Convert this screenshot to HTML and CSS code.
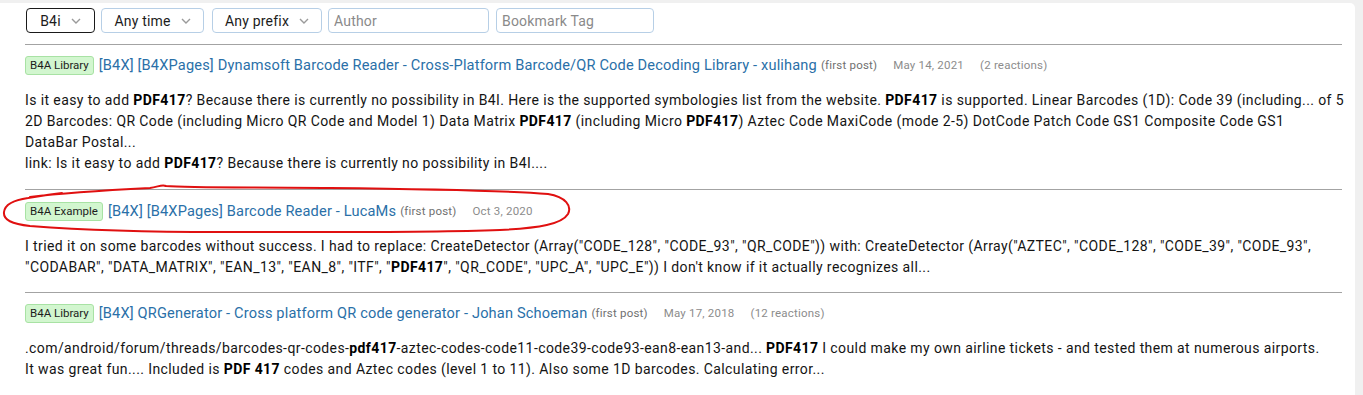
FILE: index.html
```html
<!DOCTYPE html>
<html lang="en">
<head>
    <meta charset="UTF-8">
    <meta name="viewport" content="width=device-width, initial-scale=1.0">
    <title>Search results</title>
    <link rel="stylesheet" href="styles.css">
</head>
<body>
    <div class="panel">
        <form class="filters">
            <div class="select focused">B4i <svg class="chev" viewBox="0 0 10 6"><polyline points="1,1 5,5 9,1"/></svg></div>
            <div class="select time">Any time <svg class="chev" viewBox="0 0 10 6"><polyline points="1,1 5,5 9,1"/></svg></div>
            <div class="select prefix">Any prefix <svg class="chev" viewBox="0 0 10 6"><polyline points="1,1 5,5 9,1"/></svg></div>
            <input type="text" class="field author" placeholder="Author">
            <input type="text" class="field tag" placeholder="Bookmark Tag">
        </form>

        <ul class="results">
            <li class="result">
                <div class="head">
                    <span class="badge">B4A Library</span>
                    <a class="title" href="#">[B4X] [B4XPages] Dynamsoft Barcode Reader - Cross-Platform Barcode/QR Code Decoding Library - xulihang</a>
                    <span class="small">(first post)</span>
                    <span class="meta">May 14, 2021</span>
                    <span class="meta">(2 reactions)</span>
                </div>
                <p class="snippet">Is it easy to add <b>PDF417</b>? Because there is currently no possibility in B4I. Here is the supported symbologies list from the website. <b>PDF417</b> is supported. Linear Barcodes (1D): Code 39 (including... of 5 2D Barcodes: QR Code (including Micro QR Code and Model 1) Data Matrix <b>PDF417</b> (including Micro <b>PDF417</b>) Aztec Code MaxiCode (mode 2-5) DotCode Patch Code GS1 Composite Code GS1 DataBar&nbsp;Postal...<br>link: Is it easy to add <b>PDF417</b>? Because there is currently no possibility in B4I....</p>
            </li>
            <li class="result">
                <div class="head">
                    <span class="badge">B4A Example</span>
                    <a class="title" href="#">[B4X] [B4XPages] Barcode Reader - LucaMs</a>
                    <span class="small">(first post)</span>
                    <span class="meta">Oct 3, 2020</span>
                </div>
                <p class="snippet">I tried it on some barcodes without success. I had to replace: CreateDetector (Array("CODE_128", "CODE_93", "QR_CODE")) with: CreateDetector (Array("AZTEC", "CODE_128", "CODE_39", "CODE_93", "CODABAR", "DATA_MATRIX", "EAN_13", "EAN_8", "ITF", "<b>PDF417</b>", "QR_CODE", "UPC_A", "UPC_E")) I don't know if it actually recognizes all...</p>
            </li>
            <li class="result">
                <div class="head">
                    <span class="badge">B4A Library</span>
                    <a class="title" href="#">[B4X] QRGenerator - Cross platform QR code generator - Johan Schoeman</a>
                    <span class="small">(first post)</span>
                    <span class="meta">May 17, 2018</span>
                    <span class="meta">(12 reactions)</span>
                </div>
                <p class="snippet">.com/android/forum/threads/barcodes-qr-codes-<b>pdf417</b>-aztec-codes-code11-code39-code93-ean8-ean13-and... <b>PDF417</b> I could make my own airline tickets - and tested them at numerous airports. It&nbsp;was great fun.... Included is <b>PDF 417</b> codes and Aztec codes (level 1 to 11). Also some 1D barcodes. Calculating error...</p>
            </li>
        </ul>

        <!-- hand drawn mark over the second result -->
        <svg class="scribble" viewBox="0 0 1363 395">
            <path d="M30 197 C70 192 110 190 150 188 C158 187 162 184 166 186 C190 188 260 187 330 188 C420 189 500 190 548 194 C566 197 572 206 568 214 C562 224 540 228 500 230 C420 233 320 232 220 232 C140 232 70 229 30 226 C12 224 3 220 4 212 C5 204 14 200 28 198 C40 196 52 194 62 193"/>
        </svg>
    </div>
</body>
</html>
```

FILE: styles.css
```css
* {
    margin: 0;
    padding: 0;
    box-sizing: border-box;
}

body {
    background-color: #f0f0f0;
    font-family: Roboto, "Noto Sans", sans-serif;
    letter-spacing: 0.2px;
    color: #141414;
}

.panel {
    position: relative;
    background-color: #fff;
    margin: 3px 8px 0 0;
    border-top-right-radius: 5px;
    height: 392px;
    overflow: hidden;
}

.filters {
    display: flex;
    align-items: center;
    gap: 6px;
    height: 42px;
    margin: 0 13px 0 25px;
    padding: 5px 0 11px 1px;
    border-bottom: 1px solid #a3a3a3;
}

.select {
    display: flex;
    align-items: center;
    justify-content: center;
    gap: 10px;
    height: 25px;
    border: 1px solid #b7cfe6;
    border-radius: 4px;
    font-size: 14px;
    color: #1c1c1c;
}

.select.focused {
    width: 69px;
    border-color: #1a1a1a;
}

.select.time {
    width: 103px;
}

.select.prefix {
    width: 110px;
    margin-left: 2px;
}

.chev {
    width: 10px;
    height: 6px;
    fill: none;
    stroke: #9a9a9a;
    stroke-width: 1.4;
}

.field {
    height: 25px;
    border: 1px solid #b7cfe6;
    border-radius: 4px;
    font-family: Roboto, "Noto Sans", sans-serif;
    font-size: 14px;
    letter-spacing: 0.2px;
    padding: 0 5px;
    outline: none;
}

.field::placeholder {
    color: #8a8a8a;
}

.author {
    width: 161px;
}

.tag {
    width: 158px;
    margin-left: 1px;
}

.results {
    list-style: none;
    margin: 0 13px 0 25px;
}

.result {
    padding: 10px 0 15px;
    border-bottom: 1px solid #a3a3a3;
}

.result:nth-child(2) {
    padding: 11px 0 14px;
}

.head {
    display: flex;
    align-items: center;
    height: 20px;
    white-space: nowrap;
}

.badge {
    display: inline-block;
    background-color: #d2f6cf;
    border: 1px solid #a8e2a4;
    border-radius: 3px;
    font-size: 11.5px;
    line-height: 17px;
    padding: 0 4px;
    color: #1d1d1d;
    letter-spacing: 0;
    margin-right: 5px;
}

.title {
    color: #2a70a8;
    text-decoration: none;
    font-size: 14.6px;
    letter-spacing: 0.16px;
}

.small {
    font-size: 11.5px;
    color: #707070;
    margin-left: 4px;
}

.meta {
    font-size: 11.5px;
    color: #8c8c8c;
    margin-left: 16px;
}

.snippet {
    font-size: 14px;
    line-height: 21px;
    letter-spacing: 0.4px;
    margin: 15px -8px 0 0;
}

.snippet b {
    font-weight: bold;
    color: #000;
}

.scribble {
    position: absolute;
    left: 0;
    top: -3px;
    width: 1363px;
    height: 395px;
    pointer-events: none;
}

.scribble path {
    fill: none;
    stroke: #e01010;
    stroke-width: 2;
    stroke-linecap: round;
}
```
